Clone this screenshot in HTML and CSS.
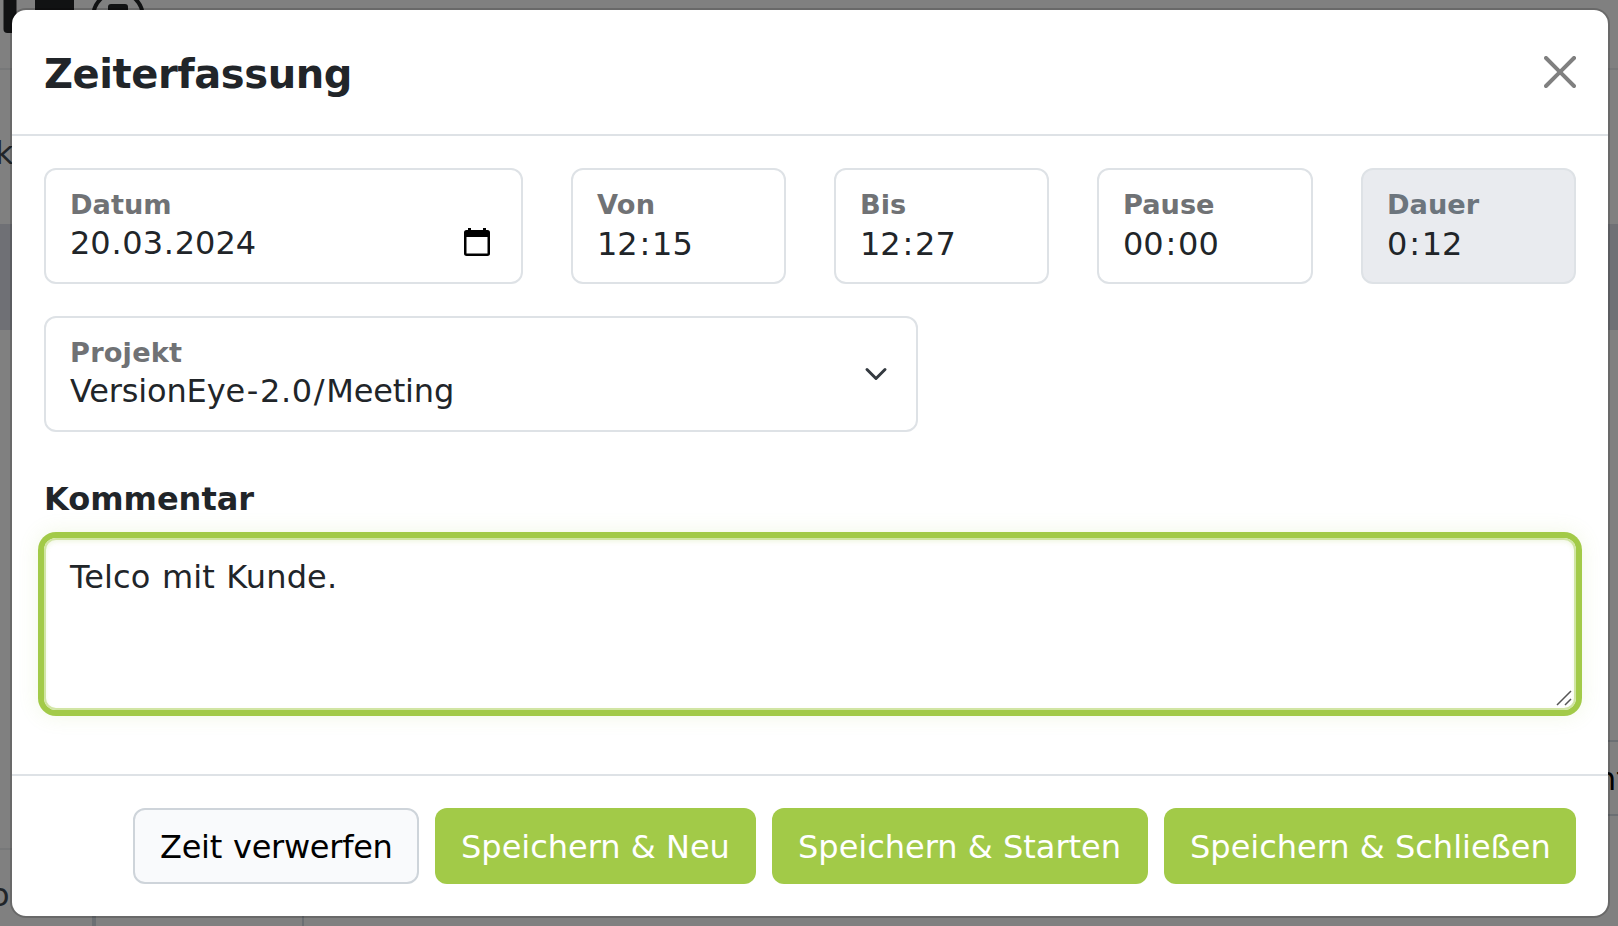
FILE: index.html
```html
<!DOCTYPE html>
<html lang="de">
<head>
<meta charset="utf-8">
<title>Zeiterfassung</title>
<link rel="stylesheet" href="styles.css">
</head>
<body>
<svg class="backdrop" width="1618" height="926" viewBox="0 0 1618 926" aria-hidden="true">
  <rect class="page-band" x="0" y="224" width="1618" height="106"/>
  <rect class="page-line-soft" x="0" y="68" width="1618" height="2"/>
  <rect class="page-line-soft" x="0" y="848" width="60" height="2"/>
  <rect class="page-line" x="92" y="910" width="4" height="16"/>
  <rect class="page-line" x="302" y="910" width="2" height="16"/>
  <rect class="page-line" x="1600" y="740" width="18" height="2"/>
  <rect class="page-line" x="1600" y="814" width="18" height="2"/>
  <rect class="page-ink" x="3.5" y="-10" width="13" height="43" rx="4"/>
  <rect class="page-ink" x="35" y="-10" width="39" height="30"/>
  <circle class="page-ring" cx="118" cy="16.7" r="24.8"/>
  <rect class="page-ink" x="108" y="4" width="20" height="16" rx="3"/>
  <text class="page-text" x="-5" y="164">k</text>
  <text class="page-text" x="-10" y="906">o</text>
  <text class="page-text page-text-black" x="1596" y="790">nt</text>
</svg>
<div class="modal" role="dialog" aria-labelledby="title">
  <header class="modal-header">
    <h1 class="modal-title" id="title">Zeiterfassung</h1>
    <svg class="close" viewBox="0 0 16 16" role="img" aria-label="Schließen"><path d="M.293.293a1 1 0 0 1 1.414 0L8 6.586 14.293.293a1 1 0 1 1 1.414 1.414L9.414 8l6.293 6.293a1 1 0 0 1-1.414 1.414L8 9.414l-6.293 6.293a1 1 0 0 1-1.414-1.414L6.586 8 .293 1.707a1 1 0 0 1 0-1.414z"/></svg>
  </header>
  <main class="modal-body">
    <div class="row">
      <div class="field">
        <div class="label">Datum</div>
        <div class="value value-date"><span>20<span class="dot">.</span>03<span class="dot">.</span>2024</span>
          <svg class="calendar" viewBox="0 0 26 28"><path fill-rule="evenodd" d="M4 0h3v2h12V0h3v2h1.500Q26 2 26 4.500V25.500Q26 28 23.500 28H2.500Q0 28 0 25.500V4.500Q0 2 2.500 2H4ZM2.500 9V25.500H23.500V9Z"/></svg>
        </div>
      </div>
      <div class="field"><div class="label label-wide">Von</div><div class="value value-time">12<span class="colon">:</span>15</div></div>
      <div class="field"><div class="label">Bis</div><div class="value value-time">12<span class="colon">:</span>27</div></div>
      <div class="field"><div class="label">Pause</div><div class="value value-time">00<span class="colon">:</span>00</div></div>
      <div class="field field-disabled"><div class="label">Dauer</div><div class="value value-time">0<span class="colon">:</span>12</div></div>
    </div>
    <div class="field field-select">
      <div>
        <div class="label label-wide">Projekt</div>
        <div class="value value-project">VersionEye<span class="colon">-</span>2<span class="dot">.</span>0<span class="colon">/</span>Meeting</div>
      </div>
      <svg class="chevron" viewBox="0 0 16 16"><path d="m2 5 6 6 6-6"/></svg>
    </div>
    <h2 class="comment-label">Kommentar</h2>
    <div class="comment">
      <span class="comment-text">Telco mit Kunde.</span>
      <svg class="grip" viewBox="0 0 16 16"><path d="M1 15 15 1M9 15l6-6"/></svg>
    </div>
  </main>
  <footer class="modal-footer">
    <div class="btn btn-light">Zeit verwerfen</div>
    <div class="btn btn-new">Speichern &amp; Neu</div>
    <div class="btn btn-start">Speichern &amp; Starten</div>
    <div class="btn btn-close">Speichern &amp; Schließen</div>
  </footer>
</div>
</body>
</html>
```
FILE: styles.css
```css
* { box-sizing: border-box; }
body {
  margin: 0;
  width: 1618px;
  height: 926px;
  padding: 8px 8px 8px 10px;
  overflow: hidden;
  background: #808080;
  color: #212529;
  font: 32px/48px Verdana, "DejaVu Sans", sans-serif;
  white-space: nowrap;
}
.backdrop { position: absolute; left: 0; top: 0; z-index: -1; }
.page-band { fill: #6f7075; }
.page-line { fill: #6b6f73; }
.page-line-soft { fill: #777879; }
.page-ink { fill: #111213; }
.page-ring { fill: none; stroke: #111213; stroke-width: 4; }
.page-text { font-size: 32px; fill: #212529; }
.page-text-black { fill: #000; }

.modal {
  display: flex;
  flex-direction: column;
  width: 1600px;
  height: 910px;
  border: 2px solid rgba(0, 0, 0, .175);
  border-radius: 16px;
  background: #fff;
  background-clip: padding-box;
}
.modal-header {
  display: flex;
  align-items: center;
  justify-content: space-between;
  height: 126px;
  padding: 0 32px;
  border-bottom: 2px solid #dee2e6;
}
.modal-title { margin: 4px 0 0; font-size: 40px; line-height: 60px; letter-spacing: -.42px; }
.close { width: 32px; height: 32px; fill: #808080; }
.modal-body { flex: 1; padding: 32px; }
.row { display: grid; grid-template-columns: 479px 215px 215px 216px 215px; gap: 48px; }
.field {
  height: 116px;
  padding: 17px 24px 0;
  border: 2px solid #dee2e6;
  border-radius: 12px;
}
.field-disabled { background: #e9ebef; }
.label { font-size: 27.2px; line-height: 36px; font-weight: bold; color: #707275; }
.label-wide { letter-spacing: .2px; }
.field-disabled .label { color: #6c757d; }
.value { line-height: 40px; }
.value-time { padding-top: 1px; }
.value-project { letter-spacing: -.15px; }
.dot { padding: 0 .73px; }
.colon { padding: 0 1.8px; }
.value-date { display: flex; justify-content: space-between; align-items: center; }
.calendar { width: 26px; height: 28px; margin: 0 7px 2px 0; }
.field-select { display: flex; justify-content: space-between; width: 874px; margin-top: 32px; }
.chevron { width: 24px; height: 24px; margin: 27px 4px 0 0; fill: none; stroke: #343a40; stroke-width: 2; stroke-linecap: round; stroke-linejoin: round; }
.comment-label { margin: 43px 0 15px; font-size: 32px; line-height: 48px; }
.comment {
  display: flex;
  justify-content: space-between;
  height: 172px;
  padding: 13px 2px 2px 24px;
  border: 2px solid #d1e5a4;
  border-radius: 12px;
  box-shadow: inset 0 2px 4px rgba(162, 202, 72, .15), 0 0 0 6px #a2ca48, 0 0 20px 6px rgba(162, 202, 72, .15);
}
.comment-text { letter-spacing: .13px; word-spacing: 1.1px; }
.grip { align-self: flex-end; width: 16px; height: 16px; stroke: #555; stroke-width: 1.5; fill: none; }
.modal-footer {
  display: flex;
  justify-content: flex-end;
  gap: 16px;
  height: 142px;
  padding: 32px;
  border-top: 2px solid #dee2e6;
}
.btn {
  height: 76px;
  padding: 1px 26px 0;
  border-radius: 12px;
  background: #a2ca48;
  color: #fff;
  line-height: 76px;
}
.btn-light {
  width: 286px;
  padding-left: 25px;
  padding-right: 23px;
  border: 2px solid #ced4da;
  background: #f9fafc;
  color: #000;
  line-height: 72px;
  letter-spacing: -.27px;
  word-spacing: 1.1px;
}
.btn-new { width: 321px; }
.btn-start { width: 376px; }
.btn-close { width: 412px; }
```
